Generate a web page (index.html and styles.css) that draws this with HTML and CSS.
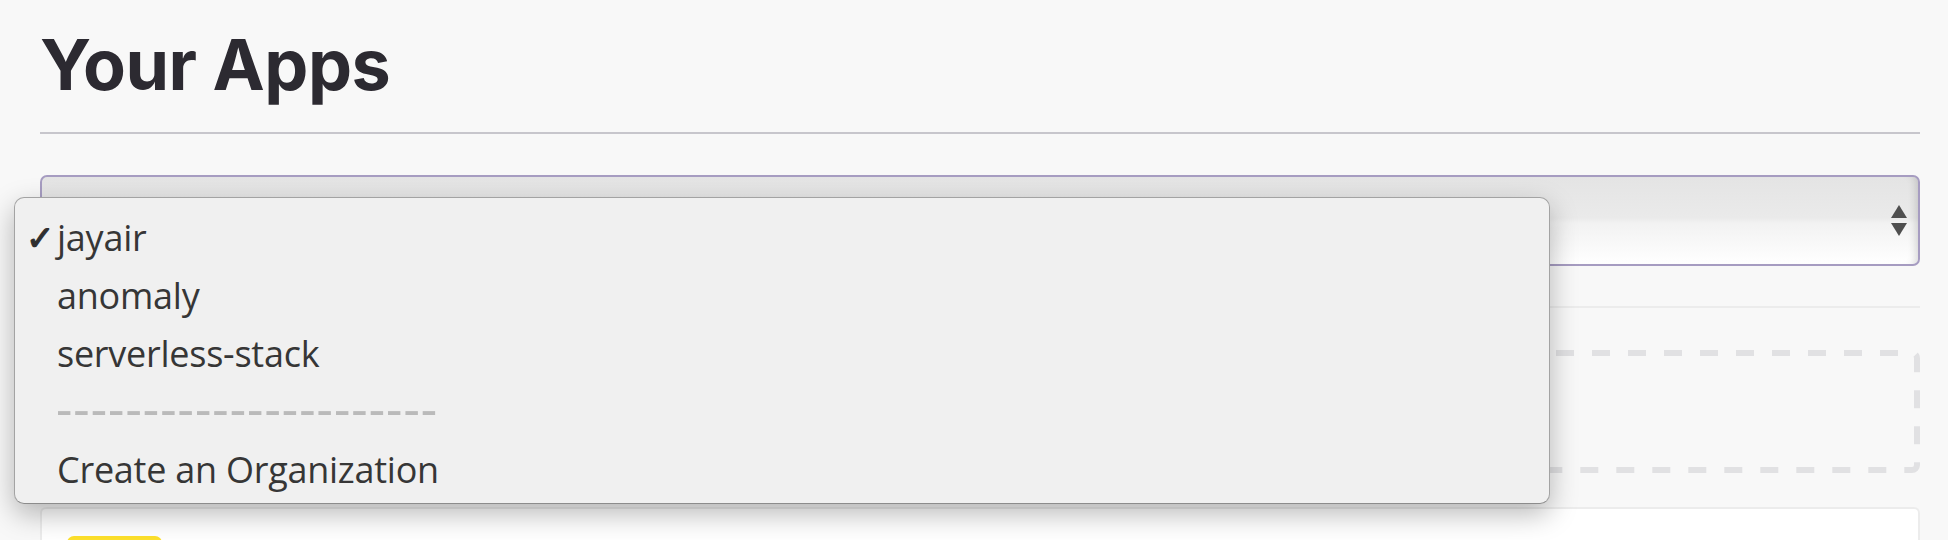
FILE: index.html
```html
<!DOCTYPE html>
<html lang="en">
<head>
<meta charset="utf-8">
<title>Your Apps</title>
<link rel="stylesheet" href="styles.css">
</head>
<body>
<div class="page">
  <h1 class="title">Your Apps</h1>
  <hr class="rule">
  <div class="org-select">
    <svg class="select-arrows" width="16" height="31" viewBox="0 0 16 31" aria-hidden="true">
      <polygon points="8,0 16,13 0,13" />
      <polygon points="0,18 16,18 8,31" />
    </svg>
  </div>
  <div class="divider"></div>
  <div class="dropzone">
    <svg class="dropzone-border" width="1880" height="123" viewBox="0 0 1880 123" aria-hidden="true">
      <rect x="3" y="3" width="1874" height="117" rx="5" ry="5" />
    </svg>
  </div>
  <div class="app-card"><span class="badge"></span></div>

  <ul class="menu" role="listbox">
    <li class="menu-item is-selected"><span class="check">✓</span><span class="label">jayair</span></li>
    <li class="menu-item"><span class="check"></span><span class="label">anomaly</span></li>
    <li class="menu-item"><span class="check"></span><span class="label">serverless-stack</span></li>
    <li class="menu-item is-disabled"><span class="check"></span><span class="label sep">----------------------</span></li>
    <li class="menu-item"><span class="check"></span><span class="label">Create an Organization</span></li>
  </ul>
</div>
</body>
</html>
```

FILE: styles.css
```css
html, body {
  margin: 0;
  padding: 0;
  background: #f8f8f8;
}

.page {
  position: relative;
  padding: 23px 28px 0 40px;
  height: 540px;
  box-sizing: border-box;
  overflow: hidden;
  display: flex;
  flex-direction: column;
}

.page > * {
  flex-shrink: 0;
}

.title {
  margin: 0;
  font-family: "Inter", "Liberation Sans", sans-serif;
  font-weight: 700;
  font-size: 70px;
  line-height: 84px;
  letter-spacing: -0.5px;
  color: #2c2a31;
}

.rule {
  margin: 25px 0 0;
  border: 0;
  height: 2px;
  background: #c7c6cc;
}

.org-select {
  margin-top: 41px;
  height: 91px;
  box-sizing: border-box;
  border: 2px solid #a69cc1;
  border-radius: 7px;
  background: linear-gradient(to bottom, #e4e4e4 0%, #eaeaea 47%, #f2f2f2 53%, #ffffff 100%);
  box-shadow: inset -9px 0 8px -7px rgba(0, 0, 0, 0.16);
  display: flex;
  align-items: center;
  justify-content: flex-end;
  padding-right: 11px;
}

.select-arrows {
  fill: #4f4f4f;
}

.divider {
  margin-top: 40px;
  height: 2px;
  background: #ececec;
}

.dropzone {
  position: relative;
  margin-top: 42px;
  height: 123px;
}

.dropzone-border {
  position: absolute;
  left: 0;
  top: 0;
  display: block;
}

.dropzone-border rect {
  fill: none;
  stroke: #e1e1e3;
  stroke-width: 6;
  stroke-dasharray: 18 18;
  stroke-dashoffset: 4;
}

.app-card {
  margin-top: 34px;
  height: 120px;
  box-sizing: border-box;
  border: 2px solid #ececec;
  border-radius: 6px;
  background: #ffffff;
  padding: 27px 0 0 25px;
}

.badge {
  display: block;
  width: 95px;
  height: 30px;
  border-radius: 7px;
  background: #fde02c;
}

.menu {
  position: absolute;
  left: 14px;
  top: 197px;
  width: 1536px;
  height: 307px;
  box-sizing: border-box;
  margin: 0;
  padding: 11px 0 0;
  list-style: none;
  background: #f0f0f0;
  border: 1px solid #a3a3a3;
  border-bottom-color: #8c8c8c;
  border-radius: 10px;
  box-shadow: 0 10px 28px rgba(0, 0, 0, 0.28);
  font-family: "Open Sans", "Liberation Sans", sans-serif;
  font-size: 36px;
  letter-spacing: -0.25px;
  color: #363636;
}

.menu-item {
  display: grid;
  grid-template-columns: 42px 1fr;
  height: 58px;
  line-height: 58px;
  white-space: nowrap;
}

.check {
  padding-left: 11px;
  font-family: "DejaVu Sans", sans-serif;
  font-size: 34px;
  font-weight: 700;
  color: #2f2f2f;
  -webkit-text-stroke: 1.2px #2f2f2f;
}

.label.sep {
  color: #bababa;
  font-family: "Roboto", sans-serif;
  font-size: 52px;
  letter-spacing: 3px;
}
```
